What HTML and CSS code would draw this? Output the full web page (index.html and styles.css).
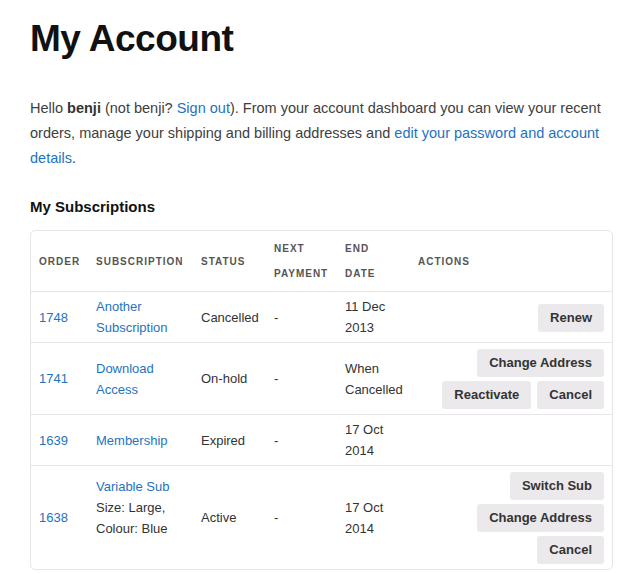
FILE: index.html
```html
<!DOCTYPE html>
<html lang="en">
<head>
    <meta charset="UTF-8">
    <meta name="viewport" content="width=device-width, initial-scale=1.0">
    <title>My Account</title>
    <link rel="stylesheet" href="styles.css">
</head>
<body>
    <div class="page">
        <h1>My Account</h1>
        <p class="intro">Hello <strong>benji</strong> (not benji? <a href="#">Sign out</a>). From your account dashboard you can view your recent orders, manage your shipping and billing addresses and <a href="#">edit your password and account details</a>.</p>

        <h2>My Subscriptions</h2>
        <table class="subs">
            <colgroup>
                <col class="col-order">
                <col class="col-sub">
                <col class="col-status">
                <col class="col-next">
                <col class="col-end">
                <col>
            </colgroup>
            <thead>
                <tr>
                    <th>Order</th>
                    <th>Subscription</th>
                    <th>Status</th>
                    <th>Next Payment</th>
                    <th>End Date</th>
                    <th>Actions</th>
                </tr>
            </thead>
            <tbody>
                <tr>
                    <td><a href="#">1748</a></td>
                    <td><a href="#">Another Subscription</a></td>
                    <td>Cancelled</td>
                    <td>-</td>
                    <td>11 Dec 2013</td>
                    <td><div class="actions"><a class="button" href="#">Renew</a></div></td>
                </tr>
                <tr>
                    <td><a href="#">1741</a></td>
                    <td><a href="#">Download Access</a></td>
                    <td>On-hold</td>
                    <td>-</td>
                    <td>When Cancelled</td>
                    <td>
                        <div class="actions">
                            <a class="button" href="#">Change Address</a>
                            <a class="button" href="#">Reactivate</a>
                            <a class="button" href="#">Cancel</a>
                        </div>
                    </td>
                </tr>
                <tr>
                    <td><a href="#">1639</a></td>
                    <td><a href="#">Membership</a></td>
                    <td>Expired</td>
                    <td>-</td>
                    <td>17 Oct 2014</td>
                    <td></td>
                </tr>
                <tr>
                    <td><a href="#">1638</a></td>
                    <td>
                        <a href="#">Variable Sub</a>
                        <div class="variation">Size: Large, Colour: Blue</div>
                    </td>
                    <td>Active</td>
                    <td>-</td>
                    <td>17 Oct 2014</td>
                    <td>
                        <div class="actions">
                            <a class="button" href="#">Switch Sub</a>
                            <a class="button" href="#">Change Address</a>
                            <a class="button" href="#">Cancel</a>
                        </div>
                    </td>
                </tr>
            </tbody>
        </table>
    </div>
</body>
</html>
```

FILE: styles.css
```css
body {
    margin: 0;
    font-family: "Liberation Sans", Arial, sans-serif;
    color: #404040;
    background-color: #fff;
}
a {
    color: #1e73be;
    text-decoration: none;
}
.page {
    width: 584px;
    padding: 17px 0 0 30px;
}
h1 {
    margin: 0;
    font-size: 37px;
    line-height: 44px;
    letter-spacing: -0.5px;
    color: #111;
}
.intro {
    margin: 35px 0 0;
    font-size: 14.5px;
    line-height: 25px;
}
.intro strong {
    color: #333;
}
h2 {
    margin: 23px 0 0;
    font-size: 15px;
    line-height: 25px;
    color: #111;
}
.subs {
    margin-top: 11px;
    width: 583px;
    table-layout: fixed;
    border-collapse: separate;
    border-spacing: 0;
    border: 1px solid #e6e6e6;
    border-radius: 5px;
    font-size: 13px;
    line-height: 21px;
    color: #333;
}
.col-order { width: 57px; }
.col-sub { width: 105px; }
.col-status { width: 73px; }
.col-next { width: 71px; }
.col-end { width: 73px; }
.subs th {
    padding: 5px 8px;
    text-align: left;
    font-size: 10px;
    line-height: 25px;
    font-weight: bold;
    letter-spacing: 1px;
    text-transform: uppercase;
    color: #555;
}
.subs td {
    padding: 4px 8px;
    border-top: 1px solid #e6e6e6;
    vertical-align: middle;
}
.variation {
    margin-bottom: 21px;
}
.actions {
    display: flex;
    flex-wrap: wrap;
    justify-content: flex-end;
    gap: 4px 6px;
    padding: 2px 0 1px;
}
.button {
    display: inline-block;
    padding: 6px 12px;
    font-size: 13px;
    line-height: 16px;
    font-weight: bold;
    color: #333;
    background-color: #ebe9eb;
    border-radius: 3px;
}
```
